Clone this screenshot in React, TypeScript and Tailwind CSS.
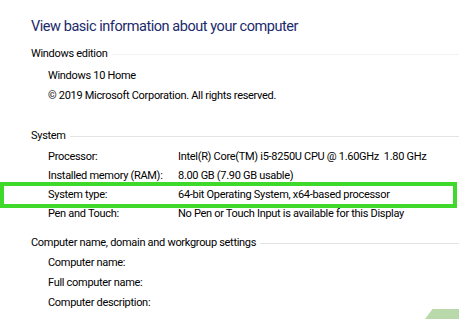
const font = { fontFamily: 'Roboto, "Noto Sans", sans-serif' };

const GroupHeader = ({ title, lineClass }: { title: string; lineClass: string }) => (
  <div className="flex h-5 items-center">
    <span className="whitespace-nowrap text-[11px] tracking-[-0.3px] text-black">{title}</span>
    <div className={`ml-1 h-px flex-1 ${lineClass}`} />
  </div>
);

const Row = ({ label, value, h = "h-5" }: { label: string; value?: string; h?: string }) => (
  <div className={`flex ${h} items-center pl-[17px] text-[11px] tracking-[-0.3px] text-black`}>
    <span className="w-[130px] shrink-0 whitespace-nowrap">{label}</span>
    {value && <span className="whitespace-pre">{value}</span>}
  </div>
);

export default function App() {
  return (
    <div className="relative h-[319px] w-[459px] overflow-hidden bg-white" style={font}>
      <div className="flex flex-col pl-[31px] pt-[14px]">
        <div className="flex h-[26px] items-center whitespace-nowrap text-[14.5px] tracking-[-0.45px] text-[#1b2a6b]">
          View basic information about your computer
        </div>

        <div className="mt-1">
          <GroupHeader title="Windows edition" lineClass="bg-[#f2f2f2]" />
        </div>
        <div className="mt-[2px]">
          <Row label="Windows 10 Home" />
          <Row label="© 2019 Microsoft Corporation. All rights reserved." />
        </div>

        <div className="mt-5">
          <GroupHeader title="System" lineClass="bg-[#e4e4e4]" />
        </div>
        <div className="mt-[2px]">
          <Row label="Processor:" value="Intel(R) Core(TM) i5-8250U CPU @ 1.60GHz  1.80 GHz" h="h-[19px]" />
          <Row label="Installed memory (RAM):" value="8.00 GB (7.90 GB usable)" h="h-[19px]" />
          <Row label="System type:" value="64-bit Operating System, x64-based processor" h="h-[19px]" />
          <Row label="Pen and Touch:" value="No Pen or Touch Input is available for this Display" h="h-[19px]" />
        </div>

        <div className="mt-[9px]">
          <GroupHeader title="Computer name, domain and workgroup settings" lineClass="bg-[#e4e4e4]" />
        </div>
        <div>
          <Row label="Computer name:" />
          <Row label="Full computer name:" />
          <Row label="Computer description:" />
        </div>
      </div>

      {/* highlight around system type */}
      <div className="absolute left-0 top-[182px] h-[26px] w-[457px] border-4 border-[#3fd92b]" />

      {/* corner watermark */}
      <div className="absolute bottom-0 right-0 h-[10px] w-[34px] bg-[#b9d9ab] [clip-path:polygon(22%_0,100%_0,100%_100%,0_100%)]" />
    </div>
  );
}
